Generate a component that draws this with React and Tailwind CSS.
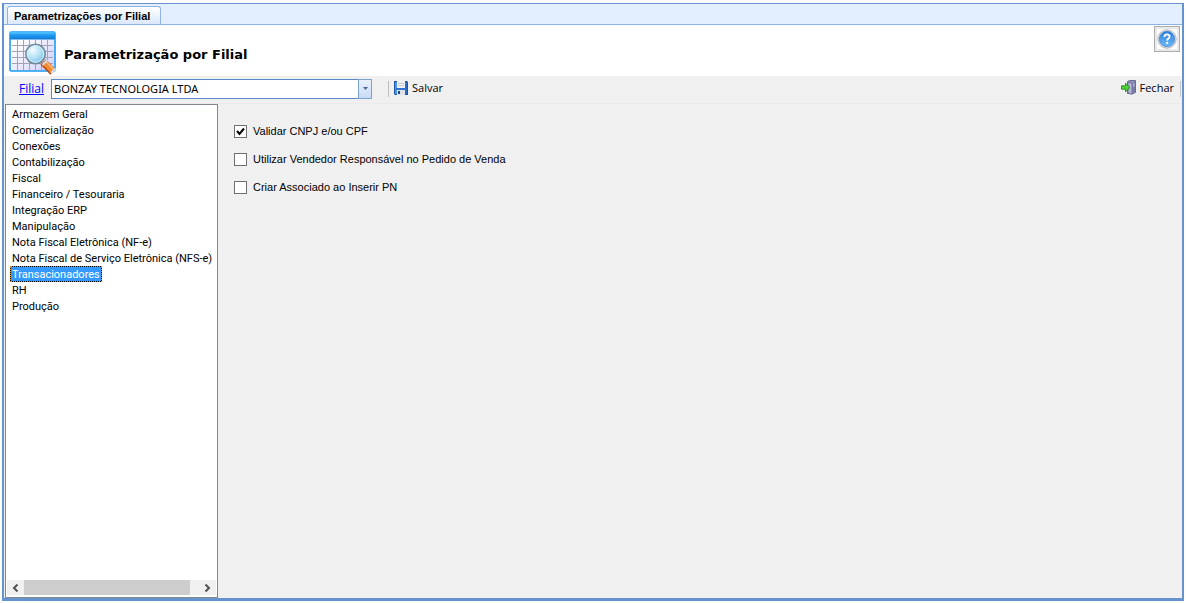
import React, { useState } from "react";

const sections = [
  "Armazem Geral",
  "Comercialização",
  "Conexões",
  "Contabilização",
  "Fiscal",
  "Financeiro / Tesouraria",
  "Integração ERP",
  "Manipulação",
  "Nota Fiscal Eletrônica (NF-e)",
  "Nota Fiscal de Serviço Eletrônica (NFS-e)",
  "Transacionadores",
  "RH",
  "Produção",
];

const options = [
  { id: "validar", label: "Validar CNPJ e/ou CPF", checked: true },
  { id: "vendedor", label: "Utilizar Vendedor Responsável no Pedido de Venda", checked: false },
  { id: "associado", label: "Criar Associado ao Inserir PN", checked: false },
];

const CalendarSearchIcon = () => (
  <svg width="48" height="44" viewBox="0 0 48 44" aria-hidden="true">
    <defs>
      <linearGradient id="sheet" x1="0" y1="0" x2="1" y2="1">
        <stop offset="0.2" stopColor="#ffffff" />
        <stop offset="1" stopColor="#cfcdfa" />
      </linearGradient>
      <linearGradient id="bar" x1="0" y1="0" x2="0" y2="1">
        <stop offset="0" stopColor="#35b4ff" />
        <stop offset="1" stopColor="#0a78d8" />
      </linearGradient>
      <radialGradient id="lens" cx="0.35" cy="0.3" r="0.8">
        <stop offset="0" stopColor="#f4fdff" />
        <stop offset="0.5" stopColor="#b5e2f5" />
        <stop offset="1" stopColor="#6cb9e2" />
      </radialGradient>
    </defs>
    <rect x="1" y="1" width="45" height="39" rx="1.5" fill="url(#sheet)" stroke="#1a9cf5" strokeWidth="1.6" />
    <path
      d="M8.5 9v30M14.5 9v30M20.5 9v30M26.5 9v30M32.5 9v30M38.5 9v30M3 14.5h41M3 20.5h41M3 26.5h41M3 32.5h41"
      stroke="#a3a3b5"
      strokeWidth="1"
    />
    <rect x="1" y="1" width="45" height="7.5" rx="1" fill="url(#bar)" />
    <path d="M1.5 2h44" stroke="#5cc8ff" />
    <path d="M34 31l10 10" stroke="#b3541c" strokeWidth="7.5" />
    <path d="M35 31l9.500 9.500" stroke="#f58a33" strokeWidth="5.5" />
    <path d="M36.5 30l8.500 8.500" stroke="#ffc078" strokeWidth="1.5" />
    <path d="M33.500 34l5-5M42 42l4.500-4.500" stroke="#d5d9e2" strokeWidth="2" />
    <circle cx="26.5" cy="23" r="9.7" fill="url(#lens)" stroke="#73889c" strokeWidth="1.6" />
    <circle cx="26.5" cy="23" r="8.2" fill="none" stroke="#d9f3fc" strokeWidth="1" />
  </svg>
);

const HelpIcon = () => (
  <svg width="20" height="20" viewBox="0 0 18 18" className="shrink-0" aria-hidden="true">
    <defs>
      <linearGradient id="help" x1="0" y1="0" x2="0" y2="1">
        <stop offset="0" stopColor="#2f7fdc" />
        <stop offset="1" stopColor="#6bbcf8" />
      </linearGradient>
    </defs>
    <circle cx="9" cy="9" r="8.3" fill="#e4e6ea" stroke="#a9adb5" strokeWidth="0.8" />
    <circle cx="9" cy="9" r="6.9" fill="url(#help)" stroke="#3677c6" strokeWidth="0.6" />
    <path d="M6.7 7.1c0-3 4.7-2.9 4.7-.3 0 1.7-2.3 1.7-2.3 3.5" fill="none" stroke="#fff" strokeWidth="1.6" />
    <circle cx="9.1" cy="12.5" r="1" fill="#fff" />
  </svg>
);

const SaveIcon = () => (
  <svg width="14" height="14" viewBox="0 0 14 14" aria-hidden="true">
    <path d="M0 0h13l1 1v13H1l-1-1z" fill="#1d55a8" />
    <path d="M1 1h2v12H1z" fill="#4f93e6" />
    <path d="M11 1h2v12h-2z" fill="#2c6cc4" />
    <rect x="3" y="0" width="8" height="7" fill="#f1f2f3" />
    <path d="M4 2.5h6M4 4.5h6" stroke="#c9cdd2" />
    <rect x="2" y="7" width="10" height="2" fill="#2f74d0" />
    <rect x="3" y="9" width="8" height="5" fill="#dfe2e6" />
    <rect x="4" y="10" width="2" height="3" fill="#24477d" />
  </svg>
);

const ExitIcon = () => (
  <svg width="15" height="15" viewBox="0 0 15 15" aria-hidden="true">
    <path d="M6.5 1.5l2-1h6v12l-2 1h-6z" fill="#8f92ba" stroke="#696b91" />
    <path d="M7 2l4 1v11.5L7 13z" fill="#b4b7da" stroke="#5d5f88" strokeWidth="0.8" />
    <path d="M11.5 3v10.5l2.5-1.5V1.5z" fill="#787ba6" />
    <path d="M12 4h1.5M12 6h1.5" stroke="#d8daf0" />
    <path d="M0.5 5.8h4V3.2L9 7.5l-4.500 4.300V9.200h-4z" fill="#4fd038" stroke="#218c19" strokeWidth="0.9" />
  </svg>
);

const Header = () => (
  <header className="flex items-start bg-white pl-[5px]">
    <div className="flex h-[51px] flex-1 items-center gap-[7px] pt-2">
      <div className="-mt-1">
        <CalendarSearchIcon />
      </div>
      <h1 className="font-['DejaVu_Sans',sans-serif] text-[13px] font-bold leading-4">
        Parametrização por Filial
      </h1>
    </div>
    <button
      type="button"
      aria-label="Ajuda"
      className="mt-px mr-[2px] flex size-[26px] items-center justify-center border border-[#adadad] bg-white shadow-[inset_0_0_0_2px_#e9e9e9]"
    >
      <HelpIcon />
    </button>
  </header>
);

const Toolbar = () => (
  <div className="flex h-7 items-center border-b border-[#eaeaea] bg-[#f0f0f0] pb-[2px] pl-[15px] font-['Open_Sans',sans-serif] text-[11px] leading-4">
    <a href="#filial" id="filial-label" className="w-8 text-xs leading-4 text-[#0000ff] underline">
      Filial
    </a>
    <div className="relative w-[321px]">
      <select
        id="filial"
        aria-labelledby="filial-label"
        className="block h-5 w-full appearance-none border border-[#5b8acb] bg-white pl-[2px] font-['Noto_Sans',sans-serif] text-[11px] leading-4 text-black"
      >
        <option>BONZAY TECNOLOGIA LTDA</option>
      </select>
      <span className="pointer-events-none absolute inset-y-0 right-0 flex w-[14px] items-center justify-center border border-[#7da2ce] bg-gradient-to-b from-[#e9f1fc] to-[#c8dbf5]">
        <svg width="5" height="3" viewBox="0 0 5 3" aria-hidden="true">
          <path d="M0 0h5L2.500 3z" fill="#47689a" />
        </svg>
      </span>
    </div>
    <div className="ml-4 h-4 border-l border-[#bdbdbd]" />
    <button type="button" className="ml-[5px] flex items-center gap-1 pb-[2px]">
      <SaveIcon />
      Salvar
    </button>
    <button type="button" className="ml-auto flex items-center gap-1 pr-[6px] pb-[2px]">
      <ExitIcon />
      Fechar
    </button>
    <div className="mr-px h-4 border-l border-[#c8c8c8]" />
  </div>
);

const SectionList = ({ selected, onSelect }) => (
  <nav
    aria-label="Parâmetros"
    className="flex w-[213px] shrink-0 flex-col border border-[#828790] bg-white px-px pt-px pb-[2px] font-['Roboto',sans-serif]"
  >
    <ul className="flex-1 pl-[3px]">
      {sections.map((name) => (
        <li key={name} className="flex h-4">
          <button
            type="button"
            onClick={() => onSelect(name)}
            className={
              name === selected
                ? "border border-black bg-[#3399ff] px-px pt-px leading-[13px] whitespace-nowrap text-white outline-1 -outline-offset-1 outline-dotted outline-[#e08a30]"
                : "border border-transparent px-px pt-px leading-[13px] whitespace-nowrap"
            }
          >
            {name}
          </button>
        </li>
      ))}
    </ul>
    <div className="flex h-[15px] items-stretch bg-[#f0f0f0]">
      <button type="button" aria-label="Rolar para a esquerda" className="flex w-[17px] items-center justify-center">
        <svg width="7" height="8" viewBox="0 0 7 8" aria-hidden="true">
          <path d="M5.500 0.500L2 4l3.500 3.500" fill="none" stroke="#505050" strokeWidth="2" />
        </svg>
      </button>
      <div className="w-[166px] bg-[#cdcdcd]" />
      <button type="button" aria-label="Rolar para a direita" className="ml-auto flex w-[17px] items-center justify-center">
        <svg width="7" height="8" viewBox="0 0 7 8" aria-hidden="true">
          <path d="M1.500 0.500L5 4L1.500 7.500" fill="none" stroke="#505050" strokeWidth="2" />
        </svg>
      </button>
    </div>
  </nav>
);

const Option = ({ id, label, checked }) => (
  <div className="flex h-[13px] items-center gap-[6px]">
    <div className="relative size-[13px]">
      <input
        id={id}
        type="checkbox"
        defaultChecked={checked}
        className="peer block size-[13px] appearance-none border border-[#707070] bg-white"
      />
      <svg
        className="pointer-events-none absolute inset-0 hidden peer-checked:block"
        width="13"
        height="13"
        viewBox="0 0 13 13"
        aria-hidden="true"
      >
        <path d="M3 6l2.500 3L10 3.500" fill="none" stroke="#000" strokeWidth="2" />
      </svg>
    </div>
    <label htmlFor={id} className="leading-[13px]">
      {label}
    </label>
  </div>
);

const App = () => {
  const [selected, setSelected] = useState("Transacionadores");

  return (
    <div className="flex min-h-screen flex-col bg-white pt-[3px] pr-[2px] pb-[2px] pl-[2px] font-['Liberation_Sans',sans-serif] text-[11px] text-black">
      <main className="flex flex-1 flex-col border-2 border-b-[3px] border-[#6593cf] border-t-[1px] bg-[#f0f0f0]">
        {/* Tab strip */}
        <div className="flex h-[21px] items-end border-b border-[#8db2e3] bg-[#e3efff] pl-[3px]">
          <button
            type="button"
            className="h-[18px] rounded-t-[3px] border border-b-0 border-[#8db2e3] bg-gradient-to-b from-white to-[#dbe8fa] pr-[10px] pl-[6px] font-bold leading-4"
          >
            Parametrizações por Filial
          </button>
        </div>

        <Header />
        <Toolbar />

        <div className="flex flex-1 pl-px">
          <SectionList selected={selected} onSelect={setSelected} />
          <form className="flex flex-col gap-[15px] pt-[21px] pl-4">
            {options.map((option) => (
              <Option key={option.id} {...option} />
            ))}
          </form>
        </div>
      </main>
    </div>
  );
};

export default App;
